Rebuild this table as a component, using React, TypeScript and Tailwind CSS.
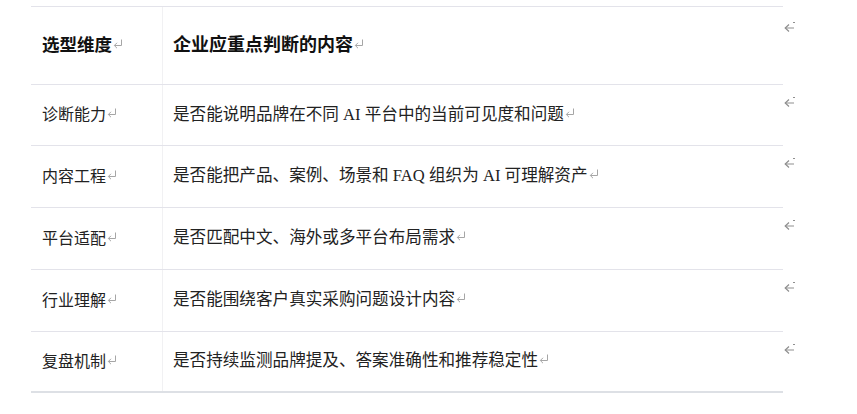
import React from 'react'

const rows = [
  { dim: '诊断能力', text: '是否能说明品牌在不同 AI 平台中的当前可见度和问题', h: 'h-[61px]' },
  { dim: '内容工程', text: '是否能把产品、案例、场景和 FAQ 组织为 AI 可理解资产', h: 'h-[62px]' },
  { dim: '平台适配', text: '是否匹配中文、海外或多平台布局需求', h: 'h-[62px]' },
  { dim: '行业理解', text: '是否能围绕客户真实采购问题设计内容', h: 'h-[62px]' },
]

// Word 单元格结束标记
function CellMark() {
  return (
    <svg width="10" height="10" viewBox="0 0 10 10" className="inline-block ml-[1px] align-[2px]">
      <path d="M8.5 0.5 V6.5 H1.5" fill="none" stroke="#a6a6a6" strokeWidth="1" />
      <path d="M4 3.8 L1.3 6.5 L4 9.2" fill="none" stroke="#a6a6a6" strokeWidth="1" />
    </svg>
  )
}

// 行结束标记
function RowMark({ top }: { top: string }) {
  return (
    <svg width="12" height="12" viewBox="0 0 12 12" className={`ml-[1px] shrink-0 ${top}`}>
      <path d="M1 7 H10" fill="none" stroke="#8f8f8f" strokeWidth="1" />
      <path d="M5 3.5 L1.2 7 L5 10.5" fill="none" stroke="#8f8f8f" strokeWidth="1.2" />
      <path d="M9 1.5 H11" fill="none" stroke="#8f8f8f" strokeWidth="1" />
    </svg>
  )
}

export default function App() {
  return (
    <div className="w-[857px] h-[414px] bg-white pl-[31px] pt-[6px] font-['Liberation_Serif','Noto_Sans_CJK_SC',serif] text-[16px] text-[#222]">
      <div className="w-[752px] border-t border-[#e3e3ea]" />

      <div className="flex items-start">
        <div className="w-[752px] h-[78px] flex border-b border-[#e3e3ea]">
          <div className="w-[132px] flex items-center pl-[11px] border-r border-[#f1f1f3] font-bold text-[#111] text-[17.5px]">
            <span>选型维度<CellMark /></span>
          </div>
          <div className="flex-1 flex items-center pl-[10px] font-bold text-[#111] text-[18px]">
            <span>企业应重点判断的内容<CellMark /></span>
          </div>
        </div>
        <RowMark top="mt-[14px]" />
      </div>

      {rows.map((r) => (
        <div key={r.dim} className="flex items-start">
          <div className={`w-[752px] ${r.h} flex border-b border-[#e3e3ea]`}>
            <div className="w-[132px] flex items-center pl-[11px] border-r border-[#f1f1f3]">
              <span>{r.dim}<CellMark /></span>
            </div>
            <div className="flex-1 flex items-center pl-[10px] text-[16.6px]">
              <span>{r.text}<CellMark /></span>
            </div>
          </div>
          <RowMark top="mt-[11px]" />
        </div>
      ))}

      <div className="flex items-start">
        <div className="w-[752px] h-[61px] flex border-b-2 border-[#dde0e5]">
          <div className="w-[132px] flex items-center pl-[11px] border-r border-[#f1f1f3]">
            <span>复盘机制<CellMark /></span>
          </div>
          <div className="flex-1 flex items-center pl-[10px] text-[16.6px]">
            <span>是否持续监测品牌提及、答案准确性和推荐稳定性<CellMark /></span>
          </div>
        </div>
        <RowMark top="mt-[11px]" />
      </div>
    </div>
  )
}
